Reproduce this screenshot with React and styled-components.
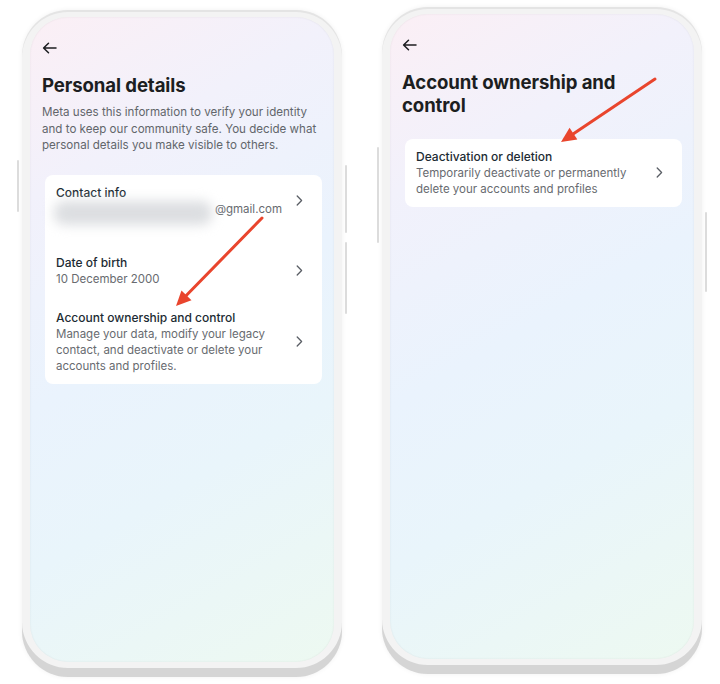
import React from "react";
import styled, { createGlobalStyle } from "styled-components";

const GlobalStyle = createGlobalStyle`
  html, body {
    margin: 0;
    padding: 0;
    background: #ffffff;
  }
  body {
    font-family: "Inter", "Roboto", "Liberation Sans", sans-serif;
    -webkit-font-smoothing: antialiased;
  }
`;

function BackArrow() {
  return (
    <svg width="15" height="12" viewBox="0 0 15 12" fill="none">
      <path d="M14 6H1.8M6.5 1.2L1.6 6l4.9 4.8" stroke="#1c1e21" strokeWidth="1.5" strokeLinecap="round" strokeLinejoin="round" />
    </svg>
  );
}

function Chevron() {
  return (
    <svg width="7" height="11" viewBox="0 0 7 11" fill="none">
      <path d="M1.2 1l4.4 4.5-4.4 4.5" stroke="#5b5f66" strokeWidth="1.3" strokeLinecap="round" strokeLinejoin="round" />
    </svg>
  );
}

function RedArrow({ x1, y1, x2, y2 }) {
  const ang = Math.atan2(y2 - y1, x2 - x1);
  const len = 15;
  const wid = 7;
  const bx = x2 - Math.cos(ang) * len;
  const by = y2 - Math.sin(ang) * len;
  const px = -Math.sin(ang) * wid;
  const py = Math.cos(ang) * wid;
  return (
    <ArrowLayer width="720" height="684" viewBox="0 0 720 684">
      <line x1={x1} y1={y1} x2={bx} y2={by} stroke="#e9452d" strokeWidth="3" strokeLinecap="round" />
      <polygon points={`${x2},${y2} ${bx + px},${by + py} ${bx - px},${by - py}`} fill="#e9452d" />
    </ArrowLayer>
  );
}

export default function App() {
  return (
    <>
      <GlobalStyle />
      <Page>
        <Phone>
          <SideKey side="left" top={150} len={52} />
          <SideKey side="right" top={155} len={68} />
          <SideKey side="right" top={232} len={72} />
          <Screen>
            <BackRow><BackArrow /></BackRow>
            <Title>Personal details</Title>
            <Intro>
              Meta uses this information to verify your identity and to keep our
              community safe. You decide what personal details you make visible to others.
            </Intro>
            <Card>
              <Row pad="9px 19px 27px 11px">
                <RowText>
                  <RowTitle>Contact info</RowTitle>
                  <EmailLine>
                    <Blur />
                    <span>@gmail.com</span>
                  </EmailLine>
                </RowText>
                <Chevron />
              </Row>
              <Row>
                <RowText>
                  <RowTitle>Date of birth</RowTitle>
                  <RowSub>10 December 2000</RowSub>
                </RowText>
                <Chevron />
              </Row>
              <Row pad="13px 19px 9px 11px">
                <RowText>
                  <RowTitle>Account ownership and control</RowTitle>
                  <RowSub>
                    Manage your data, modify your legacy contact, and deactivate or
                    delete your accounts and profiles.
                  </RowSub>
                </RowText>
                <Chevron />
              </Row>
            </Card>
          </Screen>
        </Phone>

        <Phone raised>
          <SideKey side="left" top={140} len={96} />
          <SideKey side="right" top={205} len={80} />
          <Screen>
            <BackRow><BackArrow /></BackRow>
            <Title narrow>Account ownership and control</Title>
            <Card spaced>
              <Row>
                <RowText>
                  <RowTitle>Deactivation or deletion</RowTitle>
                  <RowSub>
                    Temporarily deactivate or permanently delete your accounts and profiles
                  </RowSub>
                </RowText>
                <Chevron />
              </Row>
            </Card>
          </Screen>
        </Phone>

        <RedArrow x1={262} y1={218} x2={176} y2={306} />
        <RedArrow x1={655} y1={79} x2={561} y2={142} />
      </Page>
    </>
  );
}

const Page = styled.div`
  position: relative;
  width: 720px;
  height: 684px;
  display: flex;
  align-items: flex-start;
  gap: 40px;
  padding: 10px 0 0 22px;
  box-sizing: border-box;
  overflow: hidden;
`;

const ArrowLayer = styled.svg`
  position: absolute;
  left: 0;
  top: 0;
  pointer-events: none;
`;

const Phone = styled.div`
  position: relative;
  width: 320px;
  height: 667px;
  margin-top: ${(p) => (p.raised ? "-3px" : "0")};
  box-sizing: border-box;
  padding: 7px 8px 15px;
  border-radius: 46px;
  background: #f3f3f3;
  box-shadow: inset 0 -9px 0 #d5d5d5, inset 0 2px 0 #e4e4e4, 0 0 5px rgba(0, 0, 0, 0.06);
  display: flex;
`;

const SideKey = styled.span`
  position: absolute;
  top: ${(p) => p.top}px;
  height: ${(p) => p.len}px;
  width: 2px;
  ${(p) => (p.side === "left" ? "left: -5px;" : "right: -5px;")}
  border-radius: 1px;
  background: #dcdcdc;
`;

const Screen = styled.div`
  flex: 1;
  border-radius: 38px;
  padding: 20px 12px 0;
  box-sizing: border-box;
  background: linear-gradient(150deg, #fbeff5 0%, #f2f1fb 22%, #eaf3fd 48%, #e9f5fb 68%, #edf9f1 100%);
  box-shadow: inset 0 0 2px rgba(0, 0, 0, 0.08);
  display: flex;
  flex-direction: column;
`;

const BackRow = styled.div`
  height: 22px;
  display: flex;
  align-items: center;
`;

const Title = styled.h1`
  margin: 15px 0 0;
  max-width: ${(p) => (p.narrow ? "250px" : "none")};
  font-size: 18.6px;
  line-height: 23px;
  font-weight: 700;
  color: #1c1e21;
  letter-spacing: -0.1px;
`;

const Intro = styled.p`
  margin: 7px 0 0;
  max-width: 282px;
  font-size: 11.6px;
  line-height: 16.5px;
  color: #62666b;
`;

const Card = styled.div`
  margin: ${(p) => (p.spaced ? "22px" : "21px")} 0 0 3px;
  background: #ffffff;
  border-radius: 8px;
  display: flex;
  flex-direction: column;
`;

const Row = styled.div`
  display: flex;
  align-items: center;
  gap: 14px;
  padding: ${(p) => p.pad || "9px 19px 9px 11px"};
`;

const RowText = styled.div`
  flex: 1;
  min-width: 0;
`;

const RowTitle = styled.div`
  font-size: 12px;
  line-height: 17px;
  font-weight: 500;
  color: #1c2b33;
`;

const RowSub = styled.div`
  font-size: 11.5px;
  line-height: 16.3px;
  color: #686b70;
`;

const EmailLine = styled.div`
  position: relative;
  display: flex;
  justify-content: flex-end;
  font-size: 11.5px;
  line-height: 17px;
  color: #686b70;
`;

const Blur = styled.span`
  position: absolute;
  left: -2px;
  top: 0;
  width: 158px;
  height: 24px;
  border-radius: 10px;
  background: #dcdee1;
  filter: blur(6px);
`;
